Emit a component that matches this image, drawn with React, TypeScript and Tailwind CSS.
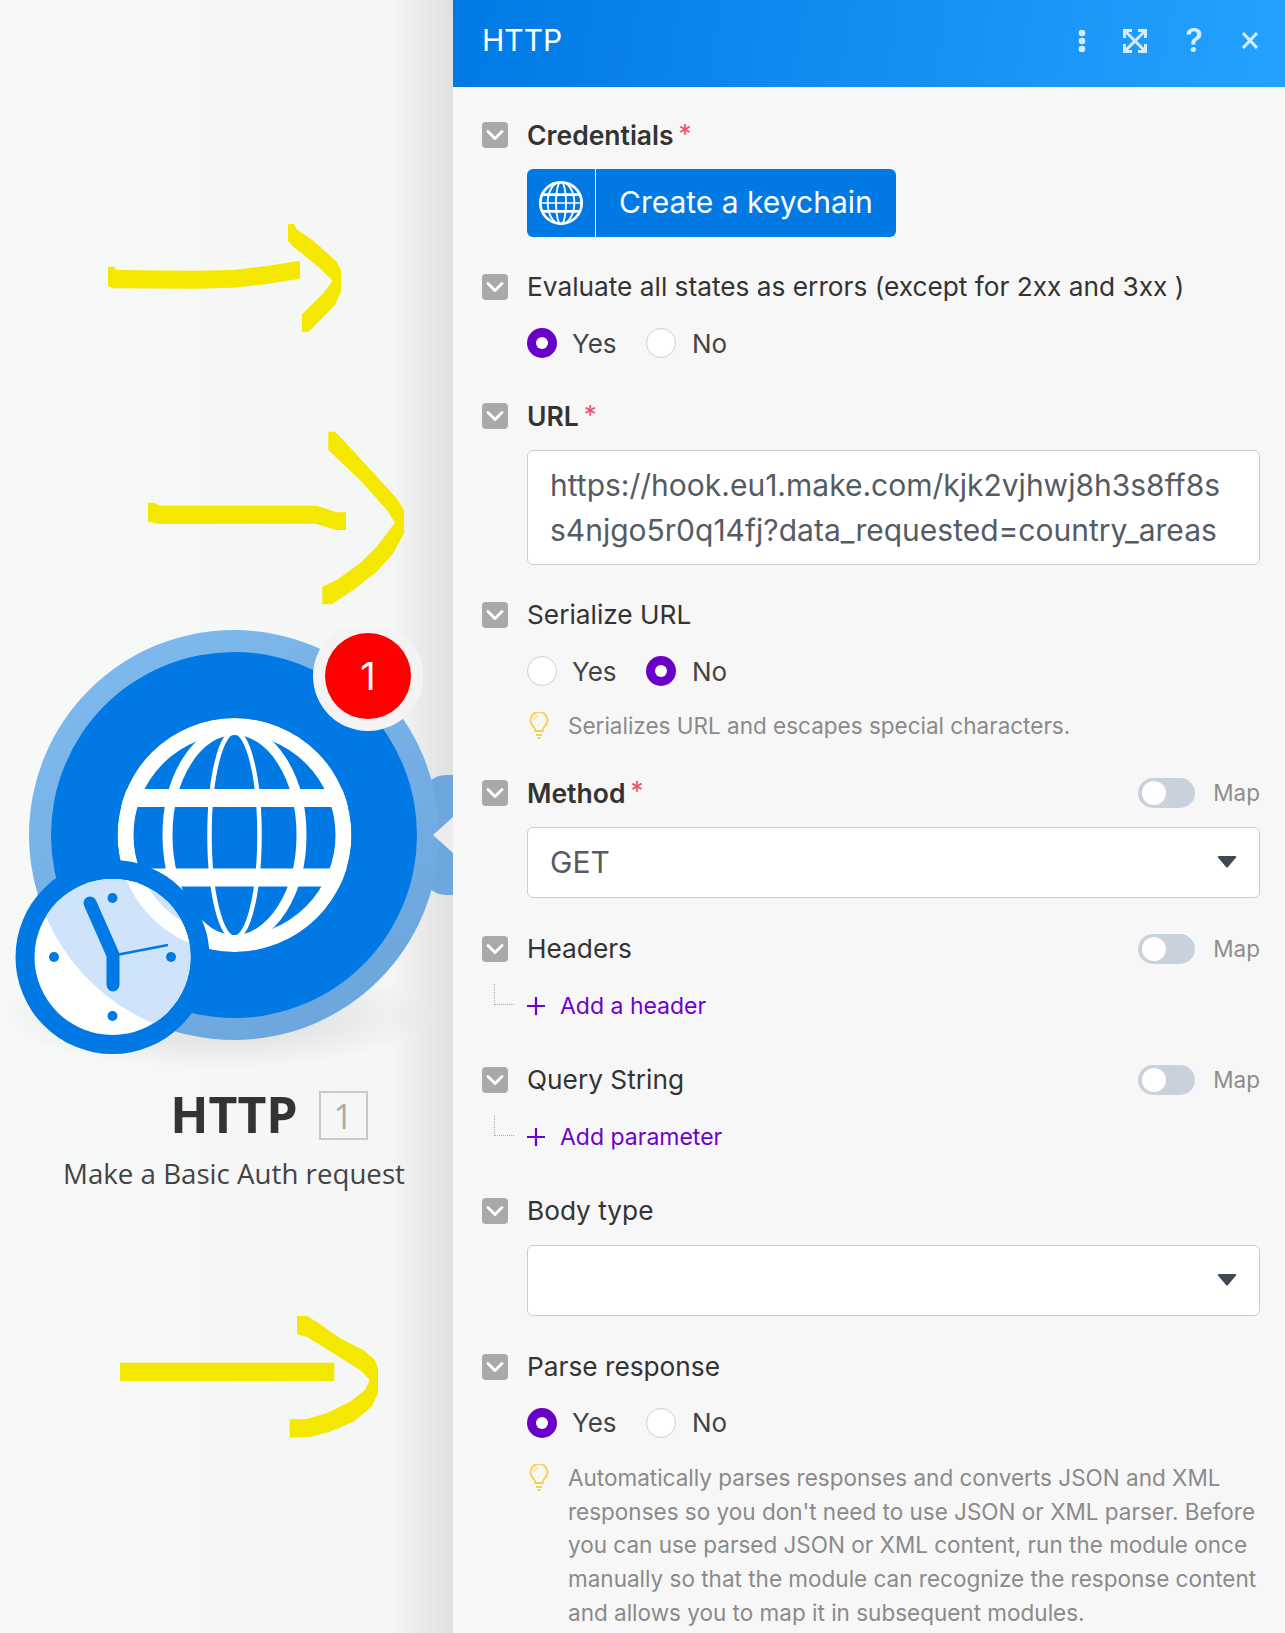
import React from "react";
import { ChevronDown } from "lucide-react";

const font = { fontFamily: "Inter, 'Noto Sans', sans-serif" };
const heroFont = { fontFamily: "'Open Sans', sans-serif" };

const Toggle = () => (
  <div className="flex items-center gap-[18px]">
    <div className="w-[57px] h-[30px] rounded-full bg-[#c9d2dc] flex items-center pl-[4px]">
      <div className="w-[24px] h-[24px] rounded-full bg-white" />
    </div>
    <span className="text-[22.5px] text-[#8d8d8d]">Map</span>
  </div>
);

const Check = () => (
  <div className="w-[26px] h-[26px] rounded-[4px] bg-[#a9a9a9] flex items-center justify-center shrink-0 overflow-hidden">
    <ChevronDown size={28} strokeWidth={2.5} className="text-white shrink-0" />
  </div>
);

const Label = ({ text, bold, required, map }: { text: string; bold?: boolean; required?: boolean; map?: boolean }) => (
  <div className="flex items-center h-[34px]">
    <Check />
    <span className={`ml-[19px] leading-[34px] text-[#333] ${bold ? "text-[26.5px] font-semibold" : "text-[26.25px]"}`}>{text}</span>
    {required && <span className="ml-[5px] text-[26px] leading-[34px] text-[#f0506e] -mt-[3px]">*</span>}
    {map && <div className="ml-auto"><Toggle /></div>}
  </div>
);

const Radio = ({ on }: { on: boolean }) => (
  on ? (
    <div className="w-[30px] h-[30px] rounded-full bg-[#6a00c8] flex items-center justify-center">
      <div className="w-[12px] h-[12px] rounded-full bg-white" />
    </div>
  ) : (
    <div className="w-[30px] h-[30px] rounded-full bg-white border border-[#cfcfcf]" />
  )
);

const YesNo = ({ yes }: { yes: boolean }) => (
  <div className="flex items-center ml-[45px] h-[34px] text-[26px] text-[#444]">
    <Radio on={yes} />
    <span className="ml-[15px] w-[74px]">Yes</span>
    <Radio on={!yes} />
    <span className="ml-[16px]">No</span>
  </div>
);

const Bulb = () => (
  <svg width="20" height="27" viewBox="0 0 20 27" fill="none" stroke="#f7cf5c" strokeWidth="2" className="shrink-0 mt-[3px]">
    <path d="M6.5 19c0-4-5-5.500-5-10.500a8.500 8.500 0 0 1 17 0c0 5-5 6.500-5 10.500z" />
    <path d="M7 23h6M8.500 26h3" />
    <path d="M5 8a4.500 4.500 0 0 1 4-4" strokeWidth="1" />
  </svg>
);

const Hint = ({ children }: { children: React.ReactNode }) => (
  <div className="flex ml-[47px] gap-[19px] text-[22.5px] leading-[33.8px] text-[#8a8a8a]">
    <Bulb />
    <div>{children}</div>
  </div>
);

const AddRow = ({ text }: { text: string }) => (
  <div className="flex items-center h-[34px] mt-[23px] relative pl-[45px]">
    <div className="absolute left-[12px] -top-[5px] w-[20px] h-[21px] border-l border-b border-dotted border-[#aaa]" />
    <svg width="18" height="18" viewBox="0 0 18 18" stroke="#6d00cf" strokeWidth="2.2">
      <path d="M9 0v18M0 9h18" />
    </svg>
    <span className="ml-[15px] text-[23px] text-[#6d00cf]">{text}</span>
  </div>
);

const Select = ({ value }: { value?: string }) => (
  <div className="ml-[45px] mt-[17px] h-[71px] bg-white border border-[#cdcdcd] rounded-[6px] flex items-center pl-[22px] pr-[22px] text-[30px] text-[#555b63]">
    <span>{value}</span>
    <svg width="20" height="12" viewBox="0 0 20 12" className="ml-auto">
      <path d="M1 1.500Q0 0 2 0h16q2 0 1 1.500L11 11q-1 1-2 0z" fill="#3f4a54" />
    </svg>
  </div>
);

const SmallGlobe = () => (
  <svg width="46" height="46" viewBox="0 0 100 100" fill="none" stroke="#fff">
    <defs>
      <clipPath id="small-globe"><circle cx="50" cy="50" r="47" /></clipPath>
    </defs>
    <g clipPath="url(#small-globe)">
      <ellipse cx="50" cy="50" rx="11" ry="46" strokeWidth="4" />
      <ellipse cx="50" cy="50" rx="29" ry="46" strokeWidth="4" />
      <path d="M0 32h100M0 68h100" strokeWidth="6" />
      <path d="M0 50h100" strokeWidth="3" />
    </g>
    <circle cx="50" cy="50" r="45" strokeWidth="6" />
  </svg>
);

const GlobeArt = () => (
  <g fill="none" stroke="#fff">
    <circle cx="234.500" cy="205" r="109" strokeWidth="16" />
    <ellipse cx="234.500" cy="205" rx="25" ry="103" strokeWidth="4.500" />
    <ellipse cx="234.500" cy="205" rx="67" ry="105" strokeWidth="10" />
    <path d="M120 168h230M120 247.500h230" strokeWidth="18" />
  </g>
);

const ModuleIcon = () => (
  <svg width="453" height="440" viewBox="0 0 453 440" className="block">
    <defs>
      <radialGradient id="sh" cx="50%" cy="50%" r="50%">
        <stop offset="50%" stopColor="#000" stopOpacity="0.07" />
        <stop offset="100%" stopColor="#000" stopOpacity="0" />
      </radialGradient>
      <linearGradient id="ring" x1="0" y1="0" x2="0.6" y2="1">
        <stop offset="0%" stopColor="#80bbf0" />
        <stop offset="100%" stopColor="#6da7dd" />
      </linearGradient>
      <clipPath id="globe-clip"><circle cx="234.500" cy="205" r="117" /></clipPath>
      <clipPath id="face-clip"><circle cx="112.500" cy="327" r="78" /></clipPath>
    </defs>
    <ellipse cx="215" cy="385" rx="215" ry="54" fill="url(#sh)" />
    <path d="M418 170Q428 145 446 145H453V265H446Q428 265 418 240z" fill="#6da7dd" />
    <circle cx="234" cy="205" r="205" fill="url(#ring)" />
    <circle cx="234" cy="205" r="183" fill="#0079e4" />
    <path d="M453 187L433 205L453 223z" fill="#ececec" />
    <g clipPath="url(#globe-clip)"><GlobeArt /></g>
    {/* clock, the module shows faintly through its face */}
    <circle cx="112.500" cy="327" r="97" fill="#0079e4" />
    <circle cx="112.500" cy="327" r="78" fill="#fff" />
    <g clipPath="url(#face-clip)">
      <circle cx="234" cy="205" r="205" fill="#cfe4fa" />
      <circle cx="234.500" cy="205" r="109" fill="none" stroke="#fff" strokeWidth="16" />
    </g>
    <g fill="#0079e4">
      <circle cx="112.500" cy="268" r="5" />
      <circle cx="112.500" cy="386" r="5" />
      <circle cx="54" cy="327" r="5" />
      <circle cx="171" cy="327" r="5" />
    </g>
    <path d="M90 273L113 325V355" fill="none" stroke="#0079e4" strokeWidth="13" strokeLinecap="round" strokeLinejoin="round" />
    <path d="M116 325L168 315" stroke="#0079e4" strokeWidth="2.500" />
    {/* badge */}
    <circle cx="368" cy="46" r="55" fill="#f3f3f3" />
    <circle cx="368" cy="46" r="43" fill="#ff0000" />
    <text x="368" y="60" textAnchor="middle" fontSize="38" fill="#fff" fontFamily="Inter, sans-serif">1</text>
  </svg>
);

// hand drawn annotations, traced from the page
const Arrows = () => (
  <svg width="453" height="1633" viewBox="0 0 453 1633" className="absolute left-0 top-0 pointer-events-none">
    <g fill="#f5e800">
      <g transform="translate(60 200) scale(0.3333)">
        <path d="M144 200L162 200L170 210L400 212L520 210L620 198L720 182L720 236L620 252L520 263L400 266L160 265L144 258z" />
        <path d="M684 72L702 72L710 88L760 122L830 185L843 210L843 275L825 315L746 395L726 395L726 343L790 280L818 242L780 205L700 140L684 122z" />
        <path d="M264 908L282 908L300 917L770 917L830 937L858 937L858 990L830 990L765 971L300 972L264 965z" />
        <path d="M805 695L825 695L850 720L1010 895L1032 930L1032 1000L1000 1060L950 1115L880 1170L815 1213L787 1213L787 1160L830 1140L900 1090L950 1040L1005 968L985 935L900 840L805 750z" />
      </g>
      <g transform="translate(100 1300) scale(0.3333)">
        <path d="M60 188H703V243H60z" />
        <path d="M591 48L620 48L650 65L720 115L790 150L825 180L834 205L834 280L815 320L760 365L690 395L630 411L569 413L569 358L620 357L680 340L750 305L795 270L810 240L780 210L700 160L620 110L591 103z" />
      </g>
    </g>
  </svg>
);

export default function App() {
  return (
    <div className="relative flex w-[1285px] h-[1633px] overflow-hidden bg-[#f7f7f7]" style={font}>
      <div className="w-[453px] h-full shrink-0 bg-[linear-gradient(90deg,#f7f8f8_0%,#f5f6f6_86%,#ececec_92%,#e0e0e0_100%)] flex flex-col pt-[630px]">
        <ModuleIcon />
        <div className="flex justify-center mt-[19px] pl-[15px]" style={heroFont}>
          <span className="relative text-[50px] leading-[50px] font-bold text-[#333]">
            HTTP
            <span className="absolute left-[calc(100%+21px)] top-[2px] w-[49px] h-[49px] border-2 border-[#c9c9c9] flex items-center justify-center text-[34px] font-normal text-[#aaa]">1</span>
          </span>
        </div>
        <div className="text-center mt-[17px] pl-[15px] text-[27.7px] leading-[34px] text-[#444]" style={heroFont}>Make a Basic Auth request</div>
      </div>
      <Arrows />

      <div className="flex-1 min-w-0">
        <div className="h-[87px] bg-[linear-gradient(100deg,#0079e4,#24a2ff)] flex items-center pl-[29px] pr-[27px] pb-[6px] text-white">
          <span className="text-[30px]">HTTP</span>
          <div className="ml-auto flex items-center text-[#d5ecff]">
            <svg width="10" height="24" viewBox="0 0 10 24" fill="currentColor">
              <circle cx="5" cy="4" r="3.300" />
              <circle cx="5" cy="12" r="3.300" />
              <circle cx="5" cy="20" r="3.300" />
            </svg>
            <svg width="24" height="24" viewBox="0 0 24 24" fill="none" stroke="currentColor" strokeWidth="3" className="ml-[36px]">
              <path d="M1.500 9V1.500H9M15 1.500H22.500V9M22.500 15V22.500H15M9 22.500H1.500V15M3 3L21 21M21 3L3 21" />
            </svg>
            <span className="ml-[39px] w-[16px] flex justify-center text-[32px] font-semibold leading-none">?</span>
            <svg width="16" height="17" viewBox="0 0 16 17" stroke="currentColor" strokeWidth="3" className="ml-[40px]">
              <path d="M1 1L15 16M15 1L1 16" />
            </svg>
          </div>
        </div>

        <div className="pl-[29px] pr-[25px] pt-[31px]">
          <Label text="Credentials" bold required />
          <div className="ml-[45px] mt-[17px] w-[369px] h-[68px] rounded-[6px] bg-[#0079e4] flex items-center text-white">
            <div className="w-[69px] h-full border-r border-white flex items-center justify-center">
              <SmallGlobe />
            </div>
            <span className="ml-[23px] -mt-[2px] text-[30px]">Create a keychain</span>
          </div>

          <div className="mt-[33px]"><Label text="Evaluate all states as errors (except for 2xx and 3xx )" /></div>
          <div className="mt-[22px]"><YesNo yes /></div>

          <div className="mt-[39px]"><Label text="URL" bold required /></div>
          <div className="ml-[45px] mt-[17px] h-[115px] bg-white border border-[#cdcdcd] rounded-[6px] px-[22px] pt-[12px] text-[30px] leading-[45px] text-[#555b63]">
            <div>https://hook.eu1.make.com/kjk2vjhwj8h3s8ff8s</div>
            <div>s4njgo5r0q14fj?data_requested=country_areas</div>
          </div>

          <div className="mt-[33px]"><Label text="Serialize URL" /></div>
          <div className="mt-[22px]"><YesNo yes={false} /></div>
          <div className="mt-[21px]"><Hint>Serializes URL and escapes special characters.</Hint></div>

          <div className="mt-[33px]"><Label text="Method" bold required map /></div>
          <Select value="GET" />

          <div className="mt-[34px]"><Label text="Headers" map /></div>
          <AddRow text="Add a header" />

          <div className="mt-[40px]"><Label text="Query String" map /></div>
          <AddRow text="Add parameter" />

          <div className="mt-[40px]"><Label text="Body type" /></div>
          <Select />

          <div className="mt-[34px]"><Label text="Parse response" /></div>
          <div className="mt-[22px]"><YesNo yes /></div>
          <div className="mt-[21px]">
            <Hint>
              Automatically parses responses and converts JSON and XML responses so you don't need to use JSON or XML parser. Before you can use parsed JSON or XML content, run the module once manually so that the module can recognize the response content and allows you to map it in subsequent modules.
            </Hint>
          </div>
        </div>
      </div>
    </div>
  );
}
